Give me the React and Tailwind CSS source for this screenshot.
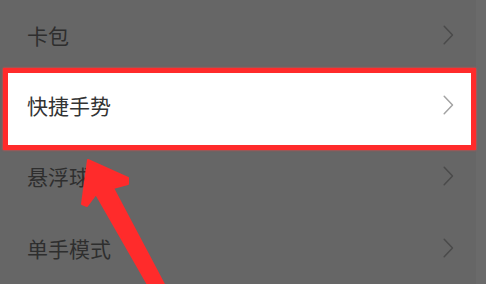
const filas = [
  { titulo: '卡包',     alto: 'h-[70px]' },
  { titulo: '快捷手势', alto: 'h-[70px]', marcado: true },
  { titulo: '悬浮球',   alto: 'h-[72px]' },
  { titulo: '单手模式', alto: 'h-[72px]' },
]

function Chevron({ className }) {
  return (
    <svg width="11" height="20" viewBox="0 0 11 20" fill="none" className={className}>
      <polyline points="1.2,1.2 9.5,10 1.2,18.8" stroke="currentColor" strokeWidth="1.5" strokeLinecap="round" strokeLinejoin="round" />
    </svg>
  )
}

function Flecha() {
  return (
    <svg className="absolute inset-0 pointer-events-none" width="486" height="284" viewBox="0 0 486 284">
      <polygon
        points="88,160 128,178 128,184 113,188 167,290 151,290 96,194 87,206 82,204"
        fill="#ff2b2b" stroke="#ff2b2b" strokeWidth="2" strokeLinejoin="round"
      />
    </svg>
  )
}

export default function App() {
  return (
    <div className="relative w-[486px] h-[284px] overflow-hidden bg-[#666666] flex"
      style={{ fontFamily: '"Noto Sans CJK SC", "Noto Sans", sans-serif' }}>
      <div className="flex-1 flex flex-col">
        {filas.map(f => (
          <div key={f.titulo} className={`relative shrink-0 ${f.alto}`}>
            {f.marcado && (
              <div className="absolute left-[3px] right-0 -top-[2px] -bottom-[10px] bg-white border-[5px] border-[#ff2b2b] shadow-[0_0_2px_#ff4040]" />
            )}
            <div className="relative h-full flex items-center justify-between pl-[27px] pr-[22px]">
              <span className={`text-[21px] leading-none ${f.marcado ? 'text-[#333333]' : 'text-[#2e2e2e]'}`}>
                {f.titulo}
              </span>
              <Chevron className={f.marcado ? 'text-[#a3a3a3]' : 'text-[#4a4a4a]'} />
            </div>
          </div>
        ))}
      </div>
      <div className="w-[10px] bg-[#6a6a6a]" />
      <Flecha />
    </div>
  )
}
